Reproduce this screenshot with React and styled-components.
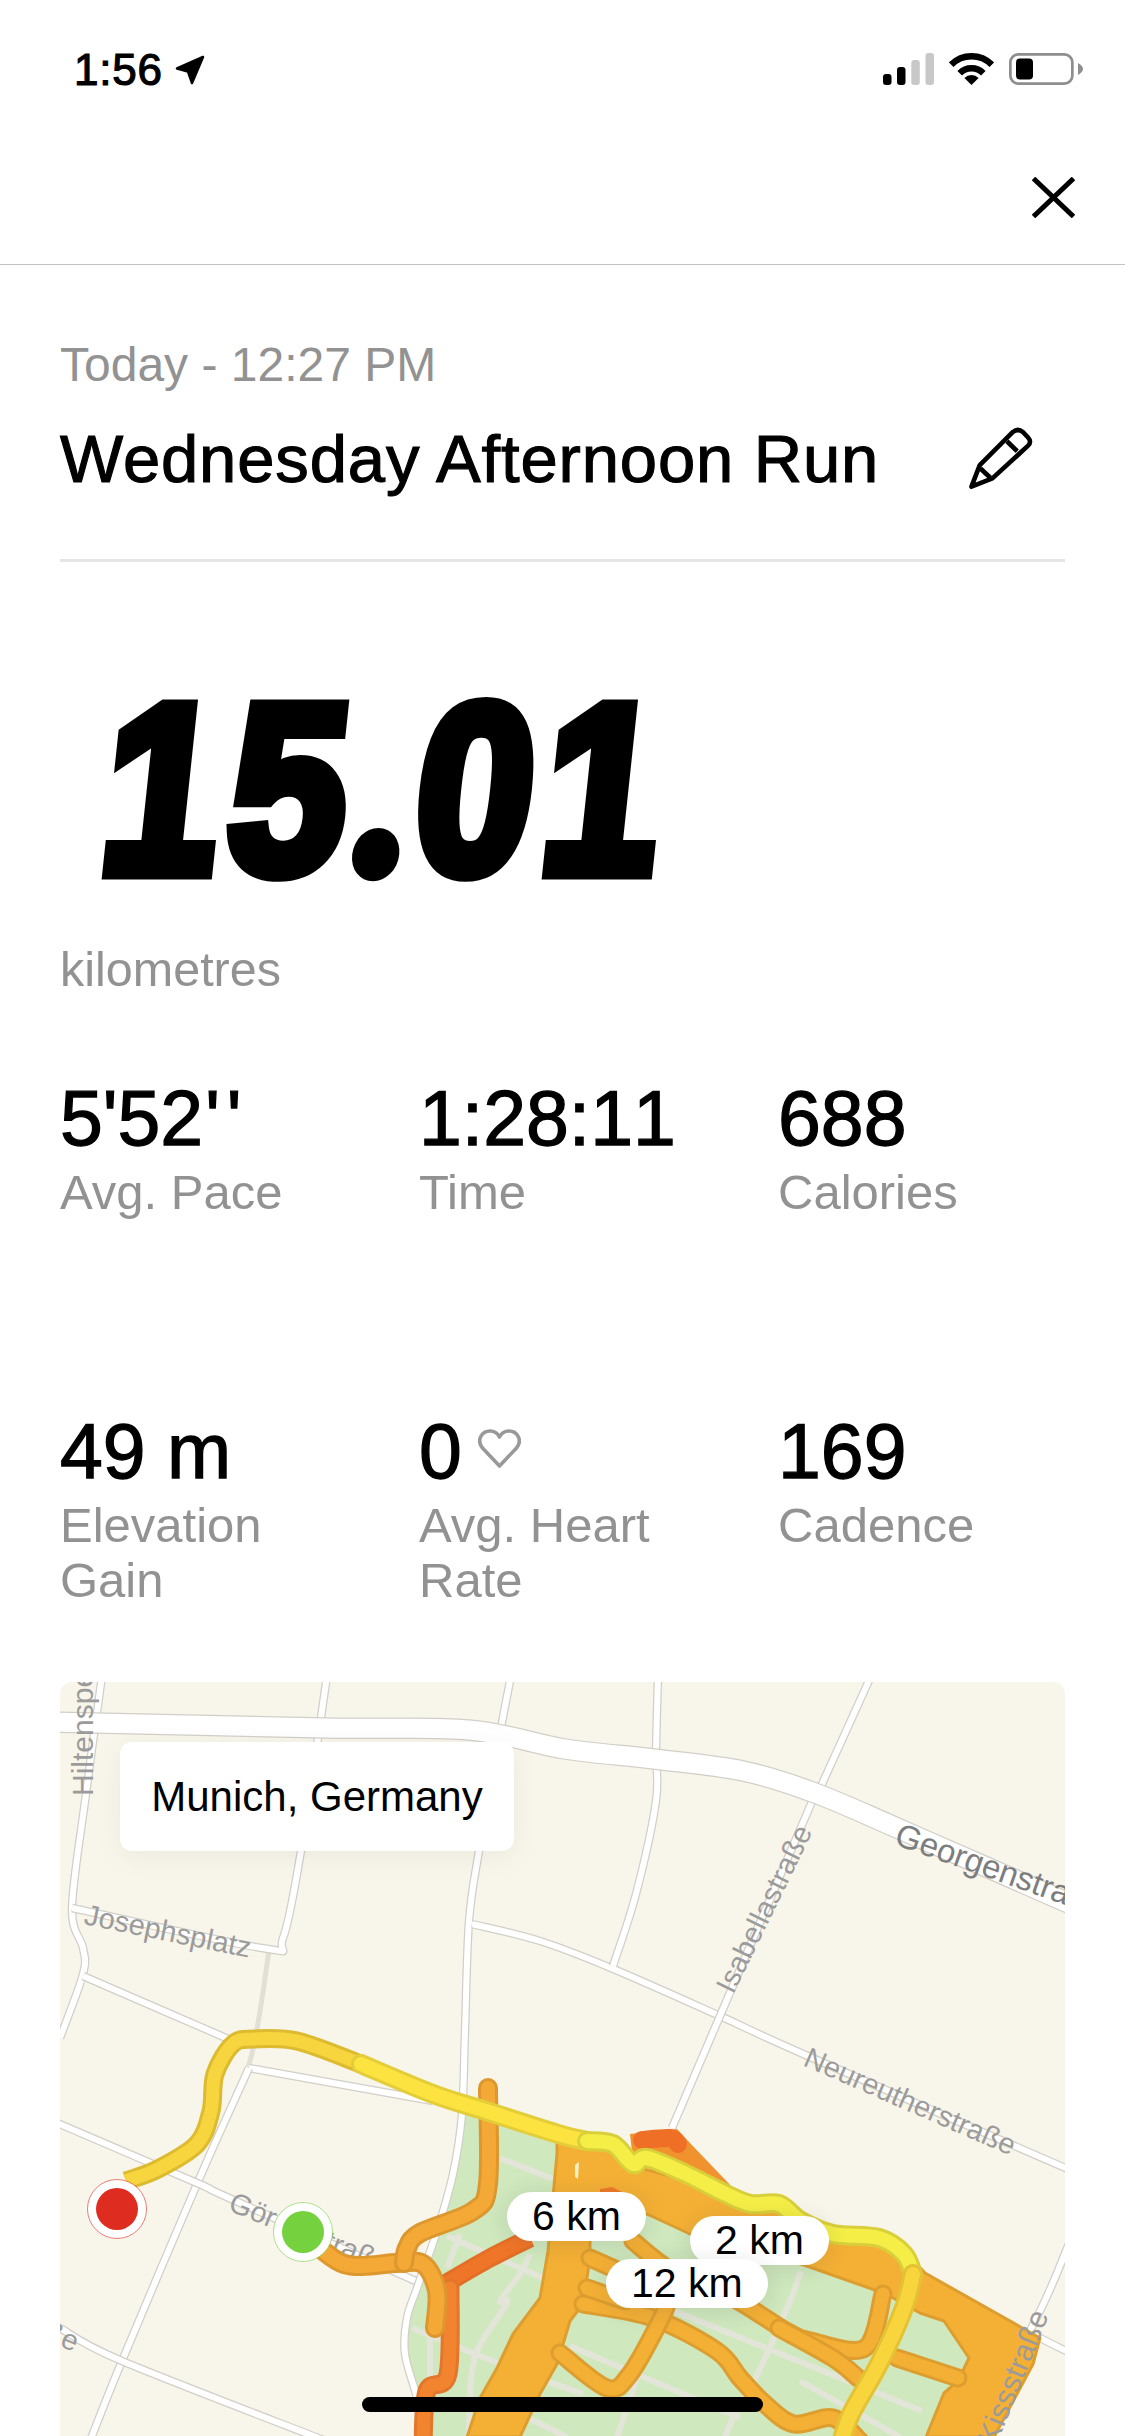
import React from 'react';
import styled, { createGlobalStyle } from 'styled-components';

const GlobalStyle = createGlobalStyle`
  html, body {
    margin: 0;
    padding: 0;
    background: #fff;
    font-family: "Liberation Sans", Arial, sans-serif;
  }
`;

const Page = styled.div`
  position: relative;
  width: 1125px;
  height: 2436px;
  overflow: hidden;
  background: #fff;
  color: #000;
`;

const Header = styled.header`
  height: 265px;
  box-sizing: border-box;
  border-bottom: 1px solid #c4c4c4;
  display: flex;
  flex-direction: column;
`;

const StatusBar = styled.div`
  display: flex;
  justify-content: space-between;
  align-items: center;
  height: 33px;
  margin-top: 53px;
  padding: 0 42px 0 74px;
`;

const StatusLeft = styled.div`
  display: flex;
  align-items: center;
  gap: 12px;
`;

const StatusRight = styled.div`
  display: flex;
  align-items: center;
  gap: 15px;
`;

const Clock = styled.span`
  font-size: 44px;
  line-height: 33px;
  letter-spacing: 0.8px;
  -webkit-text-stroke: 1.2px #000;
`;

const CloseRow = styled.div`
  display: flex;
  justify-content: flex-end;
  padding: 91px 50px 0 0;
`;

const Main = styled.main`
  padding: 72px 60px 0;
`;

const DateLine = styled.div`
  font-size: 48px;
  line-height: 56px;
  color: #929292;
`;

const TitleRow = styled.div`
  display: flex;
  align-items: center;
  justify-content: space-between;
  height: 76px;
  margin-top: 28px;
  padding: 0 32px 62px 0;
  border-bottom: 3px solid #e5e5e5;
`;

const Title = styled.h1`
  margin: 0;
  font-size: 67px;
  line-height: 76px;
  font-weight: 400;
  letter-spacing: 0.85px;
  -webkit-text-stroke: 1.1px #000;
`;

const Hero = styled.div`
  height: 379px;
  padding: 117px 0 0 34px;
  box-sizing: border-box;
`;

const HeroValue = styled.div`
  font-size: 240px;
  line-height: 200px;
  font-weight: 700;
  letter-spacing: 12px;
  -webkit-text-stroke: 15px #000;
  transform: scaleX(0.87) skewX(-7deg);
  transform-origin: left bottom;
`;

const HeroPoint = styled.span`
  font-family: Lato, "Liberation Sans", sans-serif;
  font-weight: 900;
`;

const Unit = styled.div`
  font-size: 48.5px;
  line-height: 56px;
  color: #929292;
`;

const StatGrid = styled.div`
  display: grid;
  grid-template-columns: repeat(3, 359px);
  row-gap: 190px;
  margin-top: 80px;
`;

const Stat = styled.div`
  display: flex;
  flex-direction: column;
`;

const StatValue = styled.div`
  display: flex;
  align-items: center;
  gap: 16px;
  font-size: 77px;
  line-height: 83px;
  font-kerning: none;
  -webkit-text-stroke: 1.3px #000;
`;

const SecondsMark = styled.span`
  letter-spacing: 7px;
  margin-left: 2px;
`;

const StatLabel = styled.div`
  margin-top: 5px;
  font-size: 49px;
  line-height: 55px;
  color: #929292;
  max-width: 270px;
`;

const MapPanel = styled.section`
  position: relative;
  margin-top: 74px;
  height: 900px;
  border-radius: 12px;
  overflow: hidden;
  background: #f8f5eb;
`;

const MapCanvas = styled.svg`
  display: block;
  width: 1005px;
  height: 900px;
`;

const PlaceCard = styled.div`
  position: absolute;
  left: 60px;
  top: 60px;
  width: 394px;
  height: 109px;
  display: flex;
  align-items: center;
  justify-content: center;
  background: #fff;
  border-radius: 12px;
  font-size: 42px;
  box-shadow: 0 6px 30px rgba(0, 0, 0, 0.05);
`;

const KmChip = styled.div`
  position: absolute;
  left: ${(p) => p.$x}px;
  top: ${(p) => p.$y}px;
  height: 49px;
  padding: 0 25px;
  display: flex;
  align-items: center;
  background: #fff;
  border-radius: 25px;
  font-size: 41px;
  box-shadow: 0 3px 22px rgba(60, 60, 60, 0.14);
`;

const HomeBar = styled.div`
  position: absolute;
  left: 362px;
  top: 2397px;
  width: 401px;
  height: 15px;
  border-radius: 8px;
  background: #000;
`;

const MapLabel = styled.text`
  font-family: "Liberation Sans", Arial, sans-serif;
  font-size: ${(p) => p.$size}px;
  fill: ${(p) => p.$color || '#9b9b9b'};
`;

const PencilSvg = styled.svg`
  flex: none;
`;

const HeartSvg = styled.svg`
  margin-bottom: 6px;
`;

const Pts = (list) => list.map((p) => p.join(',')).join(' ');

// smooth line through points, in page pixels
const smooth = (pts) => {
  let d = `M${pts[0][0]} ${pts[0][1]}`;
  for (let i = 0; i < pts.length - 1; i++) {
    const p0 = pts[i - 1] || pts[i];
    const p1 = pts[i];
    const p2 = pts[i + 1];
    const p3 = pts[i + 2] || p2;
    const c1 = [p1[0] + (p2[0] - p0[0]) / 6, p1[1] + (p2[1] - p0[1]) / 6];
    const c2 = [p2[0] - (p3[0] - p1[0]) / 6, p2[1] - (p3[1] - p1[1]) / 6];
    d += ` C${c1[0]} ${c1[1]} ${c2[0]} ${c2[1]} ${p2[0]} ${p2[1]}`;
  }
  return d;
};

const minorRoads = [
  [[102, 1675], [86, 1793], [72, 1907], [83, 1947], [83, 1973], [60, 2037]],
  [[72, 1907], [262, 1947], [283, 1937], [301, 1850], [318, 1737], [327, 1675]],
  [[83, 1975], [233, 2040]],
  [[249, 2067], [433, 2100]],
  [[249, 2067], [197, 2183], [122, 2360], [90, 2440]],
  [[55, 2121], [197, 2182], [229, 2197], [420, 2282]],
  [[60, 2327], [122, 2360], [326, 2440]],
  [[511, 1675], [501, 1727], [479, 1850], [469, 1920], [465, 2030], [462, 2113], [453, 2173], [437, 2230], [417, 2287], [407, 2317], [405, 2353], [417, 2397], [425, 2440]],
  [[472, 1923], [540, 1940], [611, 1967], [720, 2015], [801, 2052], [1070, 2169]],
  [[658, 1675], [656, 1750], [656, 1800], [636, 1893], [613, 1965]],
  [[871, 1675], [822, 1783], [811, 1803], [720, 2015], [672, 2127]],
  [[1070, 2240], [1040, 2310], [972, 2440]],
  [[1040, 2337], [1070, 2352]],
];

const parkPaths = [
  [[500, 2157], [553, 2178]],
  [[447, 2235], [543, 2277]],
  [[460, 2233], [447, 2267]],
  [[530, 2253], [520, 2273], [500, 2300], [507, 2302], [477, 2350], [470, 2393], [469, 2440]],
  [[412, 2327], [500, 2363], [583, 2393]],
  [[430, 2330], [430, 2397]],
  [[520, 2413], [567, 2436]],
  [[570, 2345], [740, 2417]],
  [[667, 2307], [922, 2410]],
  [[637, 2377], [617, 2436]],
  [[801, 2270], [786, 2310], [754, 2380], [733, 2417], [725, 2436]],
  [[800, 2380], [900, 2436]],
];

const bandFill = [
  [557, 2140], [597, 2135], [633, 2165], [726, 2190], [779, 2203], [801, 2222], [900, 2245],
  [925, 2272], [1040, 2337], [1033, 2363], [994, 2436], [926, 2436], [944, 2392], [958, 2380],
  [969, 2357], [944, 2320], [920, 2312], [886, 2293], [801, 2263], [690, 2233], [647, 2213],
  [590, 2225], [590, 2257], [583, 2303], [570, 2320], [557, 2363], [540, 2393], [520, 2436],
  [467, 2436], [480, 2397], [497, 2367], [513, 2333], [540, 2297], [548, 2250], [557, 2153],
];

const orangeLines = [
  [[633, 2240], [672, 2270], [733, 2297], [786, 2330], [811, 2340], [865, 2347], [883, 2293]],
  [[583, 2303], [653, 2317], [717, 2350], [740, 2377], [765, 2403], [794, 2423], [833, 2417], [860, 2440]],
  [[560, 2352], [607, 2387], [630, 2373], [660, 2320], [669, 2298]],
  [[779, 2327], [833, 2357], [858, 2377]],
  [[897, 2357], [958, 2377]],
  [[590, 2257], [635, 2277]],
  [[587, 2287], [625, 2300]],
];

const Trail = ({ pts, fill, edge, width, cap = 'round' }) => (
  <>
    <path d={smooth(pts)} fill="none" stroke={edge} strokeWidth={width + 6} strokeLinecap={cap} strokeLinejoin="round" />
    <path d={smooth(pts)} fill="none" stroke={fill} strokeWidth={width} strokeLinecap={cap} strokeLinejoin="round" />
  </>
);

const Road = ({ pts, width = 6 }) => (
  <>
    <path d={smooth(pts)} fill="none" stroke="#d1cfc8" strokeWidth={width + 2.5} />
    <path d={smooth(pts)} fill="none" stroke="#fff" strokeWidth={width} />
  </>
);

const Pin = ({ x, y, color }) => (
  <>
    <circle cx={x} cy={y} r={29.5} fill="#fff" stroke={color} strokeWidth={0.6} />
    <circle cx={x} cy={y} r={21} fill={color} />
  </>
);

const RouteMap = () => (
  <MapCanvas viewBox="60 1681 1005 900">
    <polygon
      points={Pts([[463, 2105], [600, 2150], [800, 2230], [1040, 2335], [970, 2460], [425, 2460], [404, 2337], [429, 2250], [451, 2180]])}
      fill="#cfe8bd"
    />
    {parkPaths.map((pts, i) => (
      <path key={i} d={smooth(pts)} fill="none" stroke="#e3e5d8" strokeWidth={6} />
    ))}
    <path d={smooth([[269, 1950], [250, 2060], [215, 2137]])} fill="none" stroke="#e2e0d6" strokeWidth={5} />
    {minorRoads.map((pts, i) => (
      <Road key={i} pts={pts} />
    ))}
    <Road width={19} pts={[[50, 1721], [326, 1727], [469, 1729], [565, 1748], [654, 1758], [743, 1770], [815, 1792], [904, 1830], [1075, 1905]]} />

    <MapLabel $size={30} transform="translate(93 1795) rotate(-90)">Hiltenspergerstraße</MapLabel>
    <MapLabel $size={29} transform="translate(83 1923) rotate(11.5)">Josephsplatz</MapLabel>
    <MapLabel $size={33} $color="#7d7d7d" transform="translate(893 1843) rotate(19.5)">Georgenstraße</MapLabel>
    <MapLabel $size={29} transform="translate(733 1994) rotate(-64)">Isabellastraße</MapLabel>
    <MapLabel $size={29} transform="translate(802 2064) rotate(23.5)">Neureutherstraße</MapLabel>
    <MapLabel $size={29} transform="translate(227 2209) rotate(22)">Görresstraße</MapLabel>
    <MapLabel $size={29} textAnchor="end" transform="translate(74 2351) rotate(22)">straße</MapLabel>

    <polygon points={Pts(bandFill)} fill="#f4b035" stroke="#dd9e2f" strokeWidth={3} strokeLinejoin="round" />
    <polygon points={Pts([[630, 2133], [677, 2128], [690, 2142], [733, 2187], [660, 2165], [633, 2160]])} fill="#f0922d" />
    <path d={smooth([[642, 2139], [670, 2137], [678, 2143]])} fill="none" stroke="#ef6f26" strokeWidth={18} strokeLinecap="round" />
    <polygon points={Pts([[600, 2188], [612, 2186], [622, 2191], [600, 2194]])} fill="#ef7a28" />
    <path d="M575 2164 L579 2161 L578 2178 L575 2176 Z" fill="#eef0c8" />
    {orangeLines.map((pts, i) => (
      <Trail key={i} pts={pts} fill="#f4b035" edge="#dd9e2f" width={13} />
    ))}
    <Trail pts={[[445, 2283], [490, 2257], [530, 2237]]} fill="#ef7528" edge="#e36f26" width={13} cap="butt" />
    <Trail pts={[[450, 2287], [448, 2373], [427, 2390], [423, 2445]]} fill="#f28430" edge="#e2762a" width={13} />
    <Trail pts={[[303, 2231], [344, 2263], [397, 2262], [423, 2263], [437, 2290], [435, 2327]]} fill="#f4a835" edge="#dd972f" width={14} />
    <Trail pts={[[404, 2262], [407, 2247], [420, 2232], [473, 2210], [488, 2183], [488, 2087]]} fill="#f4a835" edge="#dd972f" width={14} />
    <Trail pts={[[126, 2180], [158, 2168], [197, 2143], [211, 2110], [215, 2073], [233, 2043], [254, 2038], [297, 2040], [361, 2063]]} fill="#f6d53e" edge="#dcbb30" width={13} cap="butt" />
    <Trail pts={[[361, 2063], [433, 2093], [486, 2110], [558, 2133], [587, 2140]]} fill="#fde340" edge="#e3cd38" width={14} />
    <Trail pts={[[587, 2140], [613, 2143], [633, 2163], [647, 2157], [686, 2173], [726, 2193], [751, 2203], [779, 2203], [801, 2220], [833, 2233], [879, 2237], [904, 2253], [913, 2273]]} fill="#f4ee46" edge="#d9cf3a" width={14} />
    <Trail pts={[[913, 2273], [904, 2307], [879, 2363], [851, 2413], [840, 2445]]} fill="#f8d53c" edge="#e4c234" width={14} />
    <MapLabel $size={30} textAnchor="end" transform="translate(1049 2314) rotate(-68)">Kissstraße</MapLabel>
    <Pin x={117} y={2208} color="#df2c20" />
    <Pin x={303} y={2231} color="#76d13f" />
  </MapCanvas>
);

const LocationArrow = () => (
  <svg width="30" height="30" viewBox="0 0 30 30">
    <path d="M28 2 L2 13.5 L13 16.5 L17 28 Z" fill="#000" stroke="#000" strokeWidth="2.5" strokeLinejoin="round" />
  </svg>
);

const SignalIcon = () => (
  <svg width="51" height="33" viewBox="0 0 51 33">
    <rect x="0" y="21" width="8.5" height="11" rx="3" fill="#000" />
    <rect x="14" y="14" width="8.5" height="18" rx="3" fill="#000" />
    <rect x="28.3" y="7" width="8.5" height="25" rx="3" fill="#c8c8c8" />
    <rect x="42.5" y="0" width="8.5" height="32" rx="3" fill="#c8c8c8" />
  </svg>
);

const WifiIcon = () => (
  <svg width="45" height="33" viewBox="0 0 45 33" fill="none" stroke="#000" strokeWidth="6.5">
    <path d="M2.2 11.7 A28.7 28.7 0 0 1 42.8 11.7" />
    <path d="M10.7 20.2 A16.7 16.7 0 0 1 34.3 20.2" />
    <path d="M22.5 32 L15.4 24.9 A10 10 0 0 1 29.6 24.9 Z" fill="#000" stroke="none" />
  </svg>
);

const BatteryIcon = () => (
  <svg width="74" height="33" viewBox="0 0 74 33">
    <rect x="1.35" y="1.35" width="62" height="29.3" rx="8" fill="none" stroke="#8e8e8e" strokeWidth="2.7" />
    <rect x="7" y="5.5" width="17" height="21" rx="4" fill="#000" />
    <path d="M69 10 Q74 13 74 16 Q74 19 69 22 Z" fill="#8e8e8e" />
  </svg>
);

const CloseIcon = () => (
  <svg width="43" height="41" viewBox="0 0 43 41" fill="none" stroke="#000" strokeWidth="5">
    <path d="M1.5 1.5 L41.5 39.5 M41.5 1.5 L1.5 39.5" />
  </svg>
);

const PencilIcon = () => (
  <PencilSvg width="66" height="65" viewBox="52 35 198 196" fill="none" stroke="#000" strokeWidth="14" strokeLinejoin="round">
    <path d="M65 215 L90 150 L190 50 Q205 38 220 50 L235 66 Q248 80 235 92 L128 190 Z" />
    <path d="M172 78 L203 108" />
    <path d="M92 160 L122 188" />
  </PencilSvg>
);

const HeartIcon = () => (
  <HeartSvg width="43" height="40" viewBox="0 0 43 40" fill="none" stroke="#999" strokeWidth="3.6" strokeLinejoin="round">
    <path d="M21.5 37 L4.5 19 C-2 11 4 2 12 2 C16 2 19.5 4 21.5 8 C23.5 4 27 2 31 2 C39 2 45 11 38.5 19 Z" />
  </HeartSvg>
);

const stats = [
  { value: "5'52", seconds: "''", label: 'Avg. Pace' },
  { value: '1:28:11', label: 'Time' },
  { value: '688', label: 'Calories' },
  { value: '49 m', label: 'Elevation Gain' },
  { value: '0', label: 'Avg. Heart Rate', heart: true },
  { value: '169', label: 'Cadence' },
];

export default function App() {
  return (
    <Page>
      <GlobalStyle />
      <Header>
        <StatusBar>
          <StatusLeft>
            <Clock>1:56</Clock>
            <LocationArrow />
          </StatusLeft>
          <StatusRight>
            <SignalIcon />
            <WifiIcon />
            <BatteryIcon />
          </StatusRight>
        </StatusBar>
        <CloseRow>
          <CloseIcon />
        </CloseRow>
      </Header>
      <Main>
        <DateLine>Today - 12:27 PM</DateLine>
        <TitleRow>
          <Title>Wednesday Afternoon Run</Title>
          <PencilIcon />
        </TitleRow>
        <Hero>
          <HeroValue>15<HeroPoint>.</HeroPoint>01</HeroValue>
        </Hero>
        <Unit>kilometres</Unit>
        <StatGrid>
          {stats.map((stat) => (
            <Stat key={stat.label}>
              <StatValue>
                <span>
                  {stat.value}
                  {stat.seconds && <SecondsMark>{stat.seconds}</SecondsMark>}
                </span>
                {stat.heart && <HeartIcon />}
              </StatValue>
              <StatLabel>{stat.label}</StatLabel>
            </Stat>
          ))}
        </StatGrid>
        <MapPanel>
          <RouteMap />
          <PlaceCard>Munich, Germany</PlaceCard>
          <KmChip $x={447} $y={510}>6 km</KmChip>
          <KmChip $x={630} $y={534}>2 km</KmChip>
          <KmChip $x={546} $y={577}>12 km</KmChip>
        </MapPanel>
      </Main>
      <HomeBar />
    </Page>
  );
}
